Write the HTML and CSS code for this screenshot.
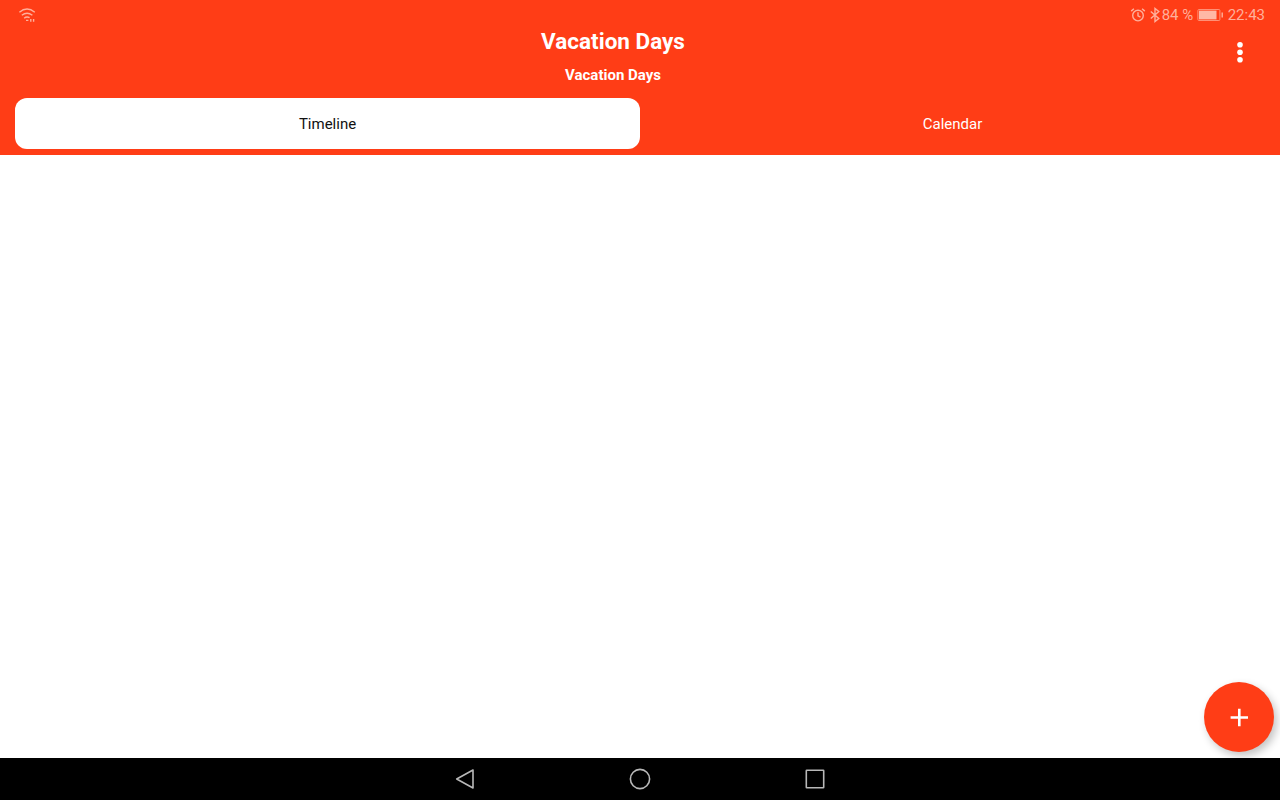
FILE: index.html
```html
<!DOCTYPE html>
<html lang="en">
<head>
<meta charset="utf-8">
<title>Vacation Days</title>
<link rel="stylesheet" href="styles.css">
</head>
<body>
<div class="screen">
  <header class="header">
    <div class="status">
      <svg class="wifi" width="20" height="16" viewBox="0 0 20 16"><path d="M2.4 5.2Q10-1.2 17.8 5.2M4.8 8.3Q10 4.1 15.4 8.3M7.2 11.2Q9.5 9 12.6 10.6"/><path d="M9 13.4h2.4M13.8 12v2.8M16.6 12v2.8"/></svg>
      <div class="status-right">
        <svg class="alarm" width="16" height="16" viewBox="0 0 16 16"><circle cx="8" cy="8.6" r="5.3"/><path d="M8 5.2v3.6l2.5 1.4M1.2 4.1l2.7-2.3M14.8 4.1l-2.7-2.3"/></svg>
        <svg class="bluetooth" width="10" height="16" viewBox="0 0 10 16"><path d="M.8 4.5l8 7L5 14.5v-13l3.8 3-8 7"/></svg>
        <span class="percent">84 %</span>
        <svg class="battery" width="27" height="14" viewBox="0 0 27 14"><rect class="case" x=".9" y="1.5" width="22" height="11" rx="1"/><rect class="level" x="2" y="2.6" width="17.5" height="8.8"/><path d="M25.2 4.6v4.8"/></svg>
        <span class="clock">22:43</span>
      </div>
    </div>
    <div class="titlebar">
      <div class="titles">
        <h1 class="title">Vacation Days</h1>
        <h2 class="subtitle">Vacation Days</h2>
      </div>
      <svg class="menu" width="54" height="24" viewBox="0 0 54 24"><circle cx="27" cy="4.8" r="2.8"/><circle cx="27" cy="12.3" r="2.8"/><circle cx="27" cy="19.8" r="2.8"/></svg>
    </div>
    <nav class="tabs">
      <div class="tab active">Timeline</div>
      <div class="tab">Calendar</div>
    </nav>
  </header>
  <main class="content">
    <div class="fab"><svg width="70" height="70" viewBox="0 0 70 70"><path d="M35.3 26.8v17.4M26.6 35.5h17.4"/></svg></div>
  </main>
  <footer class="navbar">
    <svg width="22" height="24" viewBox="0 0 22 24"><path d="M19 3v18L2.7 12z"/></svg>
    <svg width="22" height="24" viewBox="0 0 22 24"><circle cx="11" cy="12" r="9.6"/></svg>
    <svg width="22" height="24" viewBox="0 0 22 24"><rect x="2.3" y="3.3" width="17.4" height="17.4" rx=".5"/></svg>
  </footer>
</div>
</body>
</html>
```
FILE: styles.css
```css
* { box-sizing: border-box; }
body { margin: 0; font-family: Roboto, sans-serif; }
svg { display: block; flex: none; fill: none; }
.screen { width: 1280px; height: 800px; display: flex; flex-direction: column; overflow: hidden; background: #fff; }
.header { height: 155px; flex: none; background: #ff3d16; color: #fff; }
.status { height: 30px; padding: 0 15px 0 17px; display: flex; align-items: center; justify-content: space-between; color: #ffb09c; }
.status svg { stroke: currentColor; stroke-width: 1.4; }
.status-right { display: flex; align-items: center; font-size: 15px; line-height: 20px; }
.bluetooth { margin-left: 4px; }
.percent { width: 32px; margin: 0 3px 0 2px; white-space: nowrap; }
.battery { margin-right: 4px; }
.status .case { stroke-width: 1; stroke: #ff9176; }
.status .level { fill: #ffb8a5; stroke: none; }
.titlebar { height: 68px; display: flex; padding-right: 13px; }
.titles { flex: 1; padding-left: 13px; text-align: center; }
.title { margin: -3px 0 0; font-size: 22.5px; line-height: 28px; font-weight: 700; }
.subtitle { margin: 10px 0 0; font-size: 15px; line-height: 20px; font-weight: 700; }
.menu { margin-top: 10px; fill: #fff; }
.tabs { display: flex; height: 51px; padding: 0 15px; }
.tab { flex: 1; display: flex; align-items: center; justify-content: center; border-radius: 12px; font-size: 15px; }
.tab.active { background: #fff; color: #111; }
.content { flex: 1; display: flex; align-items: flex-end; justify-content: flex-end; padding: 0 6px 6px; overflow: hidden; }
.fab { width: 70px; height: 70px; border-radius: 50%; background: #ff3d16; box-shadow: 3px 4px 8px rgba(0, 0, 0, .24); }
.fab svg { stroke: #fff; stroke-width: 2.6; }
.navbar { height: 42px; flex: none; display: flex; align-items: center; justify-content: center; gap: 153px; background: #000; }
.navbar svg { stroke: #b8b8b8; stroke-width: 1.6; stroke-linejoin: round; }
```
